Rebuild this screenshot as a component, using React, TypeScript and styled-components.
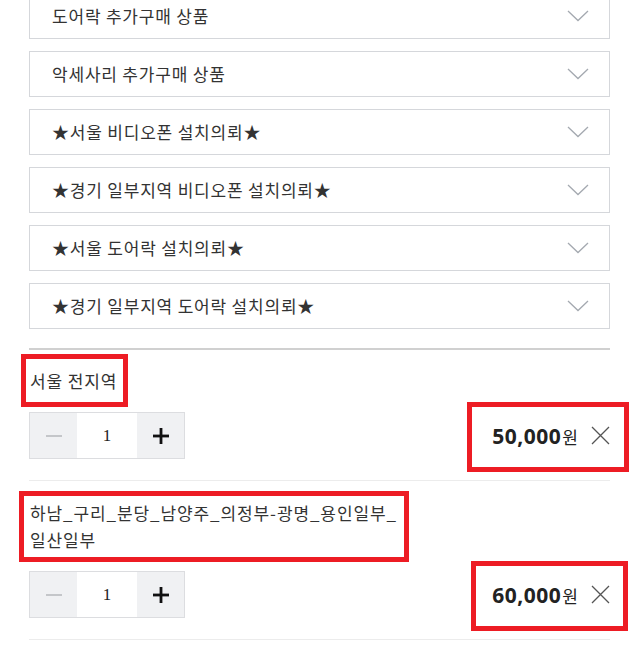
import React from "react";
import styled, { createGlobalStyle } from "styled-components";

const GlobalStyle = createGlobalStyle`
  html, body { margin: 0; padding: 0; background: #fff; }
  body { font-family: "Noto Sans CJK KR", "Noto Sans", sans-serif; color: #333; }
  * { box-sizing: border-box; }
`;

const Page = styled.div`
  padding: 0 32px 0 29px;
  margin-top: -7px;
`;

const SelectList = styled.div`
  display: flex;
  flex-direction: column;
  gap: 12px;
`;

const SelectBox = styled.div`
  height: 46px;
  border: 1px solid #d5d7db;
  display: flex;
  align-items: center;
  justify-content: space-between;
  padding: 0 20px 0 22px;
  font-size: 17px;
  letter-spacing: 0.8px;
  line-height: 20px;
  color: #333;
`;

const Chevron = () => (
  <svg width="22" height="12" viewBox="0 0 22 12" fill="none">
    <path d="M1 1 L11 10.5 L21 1" stroke="#a4a9b0" strokeWidth="1.3" />
  </svg>
);

const Cart = styled.div`
  margin-top: 19px;
  border-top: 2px solid #d0d0d0;
`;

const Item = styled.div<{ $top: number }>`
  padding: ${(p) => p.$top}px 0 21px;
  border-bottom: 1px solid #ececec;
  display: flex;
  flex-direction: column;
  gap: 18px;
`;

const Highlight = styled.div<{ $t: number; $r: number; $b: number; $l: number }>`
  position: relative;
  &::after {
    content: "";
    position: absolute;
    top: ${(p) => -p.$t}px;
    right: ${(p) => -p.$r}px;
    bottom: ${(p) => -p.$b}px;
    left: ${(p) => -p.$l}px;
    border: 5px solid #ed1c24;
    pointer-events: none;
  }
`;

const Title = styled(Highlight)<{ $width?: number }>`
  align-self: flex-start;
  width: ${(p) => (p.$width ? `${p.$width}px` : "auto")};
  font-size: 17px;
  letter-spacing: 0.9px;
  line-height: 27px;
  color: #333;
  padding-left: 1px;
`;

const Row = styled.div`
  display: flex;
  align-items: center;
  justify-content: space-between;
`;

const Qty = styled.div`
  display: flex;
  height: 47px;
  border: 1px solid #dcdde0;
`;

const QtyBtn = styled.div`
  width: 47px;
  display: flex;
  align-items: center;
  justify-content: center;
  background: #f0f1f3;
`;

const QtyValue = styled.div`
  width: 60px;
  display: flex;
  align-items: center;
  justify-content: center;
  background: #fff;
  font-family: "Liberation Serif", "DejaVu Serif", serif;
  font-size: 17px;
  color: #222;
`;

const PriceArea = styled(Highlight)`
  display: flex;
  align-items: center;
  height: 47px;
  gap: 13px;
`;

const Price = styled.div`
  display: flex;
  align-items: baseline;
  color: #222;
`;

const Amount = styled.span`
  font-family: "Noto Sans", "Open Sans", sans-serif;
  font-size: 21px;
  font-weight: 700;
  letter-spacing: 0.5px;
`;

const Won = styled.span`
  font-size: 17px;
  font-weight: 400;
  margin-left: 1px;
`;

const Minus = () => (
  <svg width="16" height="16" viewBox="0 0 16 16">
    <rect x="0" y="7" width="16" height="2" fill="#c4c6c9" />
  </svg>
);

const Plus = () => (
  <svg width="16" height="16" viewBox="0 0 16 16">
    <rect x="0" y="6.6" width="16" height="2.8" fill="#111" />
    <rect x="6.6" y="0" width="2.8" height="16" fill="#111" />
  </svg>
);

const Close = () => (
  <svg width="19" height="19" viewBox="0 0 19 19" fill="none">
    <path d="M1 1 L18 18 M18 1 L1 18" stroke="#555" strokeWidth="1.3" />
  </svg>
);

const selects = [
  "도어락 추가구매 상품",
  "악세사리 추가구매 상품",
  "★서울 비디오폰 설치의뢰★",
  "★경기 일부지역 비디오폰 설치의뢰★",
  "★서울 도어락 설치의뢰★",
  "★경기 일부지역 도어락 설치의뢰★",
];

type CartItem = {
  title: string;
  price: string;
  top: number;
  titleWidth?: number;
  titleBox: [number, number, number, number];
  priceBox: [number, number, number, number];
};

const items: CartItem[] = [
  {
    title: "서울 전지역",
    price: "50,000",
    top: 17,
    titleBox: [13, 11, 13, 8],
    priceBox: [10, 19, 13, 25],
  },
  {
    title: "하남_구리_분당_남양주_의정부-광명_용인일부_일산일부",
    price: "60,000",
    top: 18,
    titleWidth: 370,
    titleBox: [8, 10, 9, 10],
    priceBox: [10, 18, 13, 21],
  },
];

export default function App() {
  return (
    <>
      <GlobalStyle />
      <Page>
        <SelectList>
          {selects.map((s) => (
            <SelectBox key={s}>
              <span>{s}</span>
              <Chevron />
            </SelectBox>
          ))}
        </SelectList>
        <Cart>
          {items.map((it) => (
            <Item key={it.title} $top={it.top}>
              <Title
                $width={it.titleWidth}
                $t={it.titleBox[0]}
                $r={it.titleBox[1]}
                $b={it.titleBox[2]}
                $l={it.titleBox[3]}
              >
                {it.title}
              </Title>
              <Row>
                <Qty>
                  <QtyBtn>
                    <Minus />
                  </QtyBtn>
                  <QtyValue>1</QtyValue>
                  <QtyBtn>
                    <Plus />
                  </QtyBtn>
                </Qty>
                <PriceArea
                  $t={it.priceBox[0]}
                  $r={it.priceBox[1]}
                  $b={it.priceBox[2]}
                  $l={it.priceBox[3]}
                >
                  <Price>
                    <Amount>{it.price}</Amount>
                    <Won>원</Won>
                  </Price>
                  <Close />
                </PriceArea>
              </Row>
            </Item>
          ))}
        </Cart>
      </Page>
    </>
  );
}
